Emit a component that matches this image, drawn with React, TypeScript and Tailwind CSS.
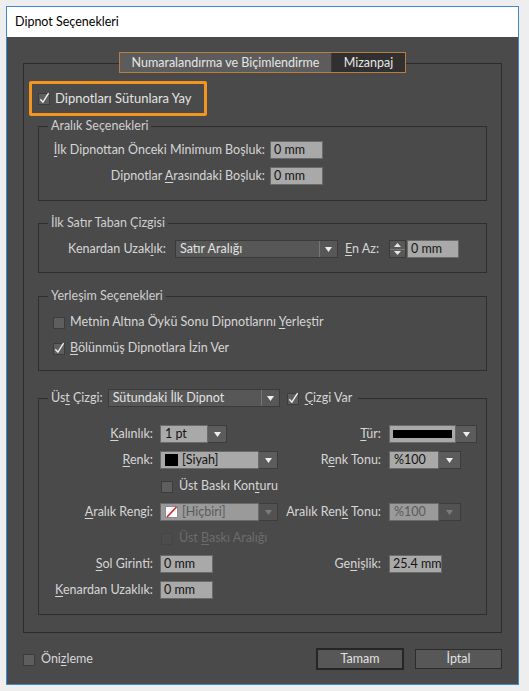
import React from "react";

const U = ({ c }: { c: string }) => (
  <span className="underline decoration-1 underline-offset-[2px]">{c}</span>
);

const Check = ({ checked = false, disabled = false }: { checked?: boolean; disabled?: boolean }) => (
  <svg width="13" height="13" viewBox="0 0 13 13" className="shrink-0">
    <rect
      x="0.5"
      y="1.5"
      width="11"
      height="11"
      fill={disabled ? "#4c4c4c" : "#5e5e5e"}
      stroke={disabled ? "#454545" : "#3c3c3c"}
    />
    {checked && (
      <path d="M2.3 7.2 L4.9 10.2 L10.6 1.2" stroke="#f2f2f2" strokeWidth="1.4" fill="none" />
    )}
  </svg>
);

const Arrow = ({ dim = false }: { dim?: boolean }) => (
  <svg width="7" height="5" viewBox="0 0 7 5">
    <path d="M0 0 L7 0 L3.5 5 Z" fill={dim ? "#7c7c7c" : "#eeeeee"} />
  </svg>
);

const Input = ({ w, v }: { w: string; v: string }) => (
  <div
    className={`${w} h-[18px] shrink-0 border border-[#6a6a6a] bg-[#a9a9a9] pl-[3px] text-[12.5px] leading-[16px] text-[#141414] whitespace-nowrap overflow-hidden`}
  >
    {v}
  </div>
);

const DarkSelect = ({ w, v }: { w: string; v: string }) => (
  <div className={`${w} h-[18px] shrink-0 flex border border-[#3a3a3a] bg-[#575757]`}>
    <div className="flex-1 pl-[4px] text-[12.5px] leading-[16px] text-[#e2e2e2] whitespace-nowrap">{v}</div>
    <div className="w-[18px] border-l border-[#767676] flex items-center justify-center">
      <Arrow />
    </div>
  </div>
);

const LightSelect = ({
  w,
  children,
  disabled = false,
  aw = "w-[19px]",
}: {
  w: string;
  children: React.ReactNode;
  disabled?: boolean;
  aw?: string;
}) => (
  <div className={`${w} h-[18px] shrink-0 flex`}>
    <div
      className={`flex-1 flex items-center gap-[4px] pl-[4px] border border-[#6a6a6a] text-[12.5px] leading-[16px] whitespace-nowrap ${
        disabled ? "bg-[#9a9a9a] text-[#5a5a5a]" : "bg-[#a9a9a9] text-[#141414]"
      }`}
    >
      {children}
    </div>
    <div
      className={`${aw} border border-l-0 border-[#3c3c3c] flex items-center justify-center ${
        disabled ? "bg-[#525252]" : "bg-[#5c5c5c]"
      }`}
    >
      <Arrow dim={disabled} />
    </div>
  </div>
);

const Legend = ({ children }: { children: React.ReactNode }) => (
  <legend className="ml-[9px] px-[3px] text-[12.5px] leading-[16px] text-[#cfcfcf]">{children}</legend>
);

export default function App() {
  return (
    <div className="w-[529px] h-[691px] bg-[#eeeeee] pt-[6px] pl-[6px] font-['Lato',sans-serif] text-[12.5px] text-[#d6d6d6]">
      <div className="w-[513px] h-[679px] border border-[#3d8ad4] flex flex-col bg-[#4a4a4a]">
        {/* title bar */}
        <div className="h-[30px] shrink-0 bg-white flex items-center pl-[8px] text-[12.5px] text-black">
          Dipnot Seçenekleri
        </div>

        {/* body */}
        <div className="flex-1 flex flex-col pt-[26px] px-[16px]">
          {/* tab panel */}
          <div className="h-[570px] border border-[#2c2c2c] flex flex-col px-[14px]">
            {/* tabs */}
            <div className="-mt-[12px] mx-auto w-[287px] h-[21px] border border-[#b97d3f] flex">
              <div className="w-[212px] bg-[#5c5c5c] border-r border-[#3a3a3a] flex items-center justify-center text-[#e6e6e6] leading-[19px]">
                Numaralandırma ve Biçimlendirme
              </div>
              <div className="flex-1 bg-[#303030] flex items-center justify-center text-[#e6e6e6] leading-[19px]">
                Mizanpaj
              </div>
            </div>

            {/* highlighted checkbox */}
            <div className="mt-[8px] -ml-[9px] w-[178px] h-[35px] border-[3px] border-[#f5951f] rounded-[2px] flex items-center pl-[6px] gap-[4px] text-[13px] text-[#e4e4e4]">
              <Check checked />
              <span>Dipnotları Sütunlara Yay</span>
            </div>

            {/* Aralık Seçenekleri */}
            <fieldset className="mt-[2px] border border-[#2e2e2e]">
              <Legend>Aralık Seçenekleri</Legend>
              <div className="pt-[7px] pb-[15px] flex flex-col gap-[8px]">
                <div className="flex items-center h-[18px]">
                  <div className="w-[226px] text-right whitespace-nowrap">
                    <U c="İ" />lk Dipnottan Önceki Minimum Boşluk:
                  </div>
                  <div className="ml-[5px]">
                    <Input w="w-[53px]" v="0 mm" />
                  </div>
                </div>
                <div className="flex items-center h-[18px]">
                  <div className="w-[226px] text-right whitespace-nowrap">
                    Dipnotlar <U c="A" />rasındaki Boşluk:
                  </div>
                  <div className="ml-[5px]">
                    <Input w="w-[53px]" v="0 mm" />
                  </div>
                </div>
              </div>
            </fieldset>

            {/* İlk Satır Taban Çizgisi */}
            <fieldset className="mt-[14px] border border-[#2e2e2e]">
              <Legend>İlk Satır Taban Çizgisi</Legend>
              <div className="pt-[9px] pb-[14px]">
                <div className="flex items-center h-[18px]">
                  <div className="w-[127px] text-right whitespace-nowrap">
                    Kenardan Uzak<U c="l" />ık:
                  </div>
                  <div className="ml-[9px]">
                    <DarkSelect w="w-[163px]" v="Satır Aralığı" />
                  </div>
                  <div className="ml-[7px] w-[44px] whitespace-nowrap">
                    <U c="E" />n Az:
                  </div>
                  <div className="w-[17px] h-[18px] border border-[#3a3a3a] bg-[#585858] flex flex-col">
                    <div className="flex-1 flex items-center justify-center border-b border-[#7a7a7a]">
                      <svg width="7" height="4" viewBox="0 0 7 4">
                        <path d="M0 4 L7 4 L3.5 0 Z" fill="#e6e6e6" />
                      </svg>
                    </div>
                    <div className="flex-1 flex items-center justify-center">
                      <svg width="7" height="4" viewBox="0 0 7 4">
                        <path d="M0 0 L7 0 L3.5 4 Z" fill="#e6e6e6" />
                      </svg>
                    </div>
                  </div>
                  <div className="ml-[1px]">
                    <Input w="w-[52px]" v="0 mm" />
                  </div>
                </div>
              </div>
            </fieldset>

            {/* Yerleşim Seçenekleri */}
            <fieldset className="mt-[15px] border border-[#2e2e2e]">
              <Legend>Yerleşim Seçenekleri</Legend>
              <div className="pt-[9px] pb-[13px] pl-[14px] flex flex-col gap-[8px]">
                <div className="flex items-center h-[18px] gap-[4px]">
                  <Check />
                  <span>
                    Metnin Altına Öykü Sonu Dipnotlarını <U c="Y" />erleştir
                  </span>
                </div>
                <div className="flex items-center h-[18px] gap-[4px]">
                  <Check checked />
                  <span>
                    <U c="B" />ölünmüş Dipnotlara İzin Ver
                  </span>
                </div>
              </div>
            </fieldset>

            {/* Üst Çizgi */}
            <fieldset className="mt-[18px] border border-[#2e2e2e]">
              <legend className="ml-[9px] pl-[3px] pr-[6px] h-[18px] flex items-center">
                <span className="whitespace-nowrap">
                  Üs<U c="t" /> Çizgi:
                </span>
                <div className="ml-[5px]">
                  <DarkSelect w="w-[172px]" v="Sütundaki İlk Dipnot" />
                </div>
                <div className="ml-[7px] flex items-center gap-[5px]">
                  <Check checked />
                  <span className="whitespace-nowrap">
                    <U c="Ç" />izgi Var
                  </span>
                </div>
              </legend>
              <div className="pt-[18px] pb-[15px] flex flex-col gap-[8px]">
                {/* Kalınlık / Tür */}
                <div className="flex items-center h-[18px]">
                  <div className="w-[241px] flex items-center">
                    <div className="w-[114px] text-right">
                      <U c="K" />alınlık:
                    </div>
                    <div className="ml-[7px]">
                      <LightSelect w="w-[67px]">1 pt</LightSelect>
                    </div>
                  </div>
                  <div className="w-[101px] text-right">
                    <U c="T" />ür:
                  </div>
                  <div className="ml-[8px] w-[88px] h-[18px] flex">
                    <div className="flex-1 border border-[#6a6a6a] bg-[#a9a9a9] flex items-center px-[3px]">
                      <div className="w-full h-[8px] bg-black" />
                    </div>
                    <div className="w-[21px] border border-l-0 border-[#3c3c3c] bg-[#5c5c5c] flex items-center justify-center">
                      <Arrow />
                    </div>
                  </div>
                </div>

                {/* Renk / Renk Tonu */}
                <div className="flex items-center h-[18px]">
                  <div className="w-[241px] flex items-center">
                    <div className="w-[114px] text-right">
                      <U c="R" />enk:
                    </div>
                    <div className="ml-[7px]">
                      <LightSelect w="w-[118px]">
                        <span className="w-[13px] h-[12px] bg-black shrink-0" />
                        <span>[Siyah]</span>
                      </LightSelect>
                    </div>
                  </div>
                  <div className="w-[101px] text-right whitespace-nowrap">
                    R<U c="e" />nk Tonu:
                  </div>
                  <div className="ml-[8px]">
                    <LightSelect w="w-[72px]" aw="w-[22px]">
                      %100
                    </LightSelect>
                  </div>
                </div>

                {/* Üst Baskı Konturu */}
                <div className="flex items-center h-[18px] pl-[122px] gap-[5px]">
                  <Check />
                  <span>
                    Üst Baskı Kon<U c="t" />uru
                  </span>
                </div>

                {/* Aralık Rengi / Aralık Renk Tonu */}
                <div className="flex items-center h-[18px]">
                  <div className="w-[241px] flex items-center">
                    <div className="w-[114px] text-right whitespace-nowrap">
                      <U c="A" />ralık Rengi:
                    </div>
                    <div className="ml-[7px]">
                      <LightSelect w="w-[118px]" disabled>
                        <svg width="13" height="12" viewBox="0 0 13 12" className="shrink-0">
                          <rect x="0.5" y="0.5" width="12" height="11" fill="#ffffff" stroke="#8a8a8a" />
                          <path d="M2 11 L11.5 1" stroke="#d2232a" strokeWidth="1.6" />
                        </svg>
                        <span>[Hiçbiri]</span>
                      </LightSelect>
                    </div>
                  </div>
                  <div className="w-[101px] text-right whitespace-nowrap">
                    Aralık Ren<U c="k" /> Tonu:
                  </div>
                  <div className="ml-[8px]">
                    <LightSelect w="w-[72px]" aw="w-[22px]" disabled>
                      %100
                    </LightSelect>
                  </div>
                </div>

                {/* Üst Baskı Aralığı (disabled) */}
                <div className="flex items-center h-[18px] pl-[122px] gap-[5px] text-[#6c6c6c]">
                  <Check disabled />
                  <span>
                    Üst <U c="B" />askı Aralığı
                  </span>
                </div>

                {/* Sol Girinti / Genişlik */}
                <div className="flex items-center h-[18px]">
                  <div className="w-[241px] flex items-center">
                    <div className="w-[114px] text-right">
                      <U c="S" />ol Girinti:
                    </div>
                    <div className="ml-[7px]">
                      <Input w="w-[53px]" v="0 mm" />
                    </div>
                  </div>
                  <div className="w-[101px] text-right">
                    Ge<U c="n" />işlik:
                  </div>
                  <div className="ml-[8px]">
                    <Input w="w-[53px]" v="25.4 mm" />
                  </div>
                </div>

                {/* Kenardan Uzaklık */}
                <div className="flex items-center h-[18px]">
                  <div className="w-[114px] text-right whitespace-nowrap">
                    <U c="K" />enardan Uzaklık:
                  </div>
                  <div className="ml-[7px]">
                    <Input w="w-[53px]" v="0 mm" />
                  </div>
                </div>
              </div>
            </fieldset>
          </div>

          {/* bottom row */}
          <div className="mt-[15px] h-[22px] flex items-center">
            <div className="flex items-center gap-[5px]">
              <Check />
              <span>
                Öni<U c="z" />leme
              </span>
            </div>
            <div className="ml-auto flex items-center gap-[11px]">
              <div className="w-[88px] h-[22px] border-2 border-[#252525] bg-[#575757] flex items-center justify-center text-[#e2e2e2]">
                Tamam
              </div>
              <div className="w-[87px] h-[20px] border border-[#2c2c2c] bg-[#575757] flex items-center justify-center text-[#e2e2e2]">
                İptal
              </div>
            </div>
          </div>
        </div>
      </div>
    </div>
  );
}
